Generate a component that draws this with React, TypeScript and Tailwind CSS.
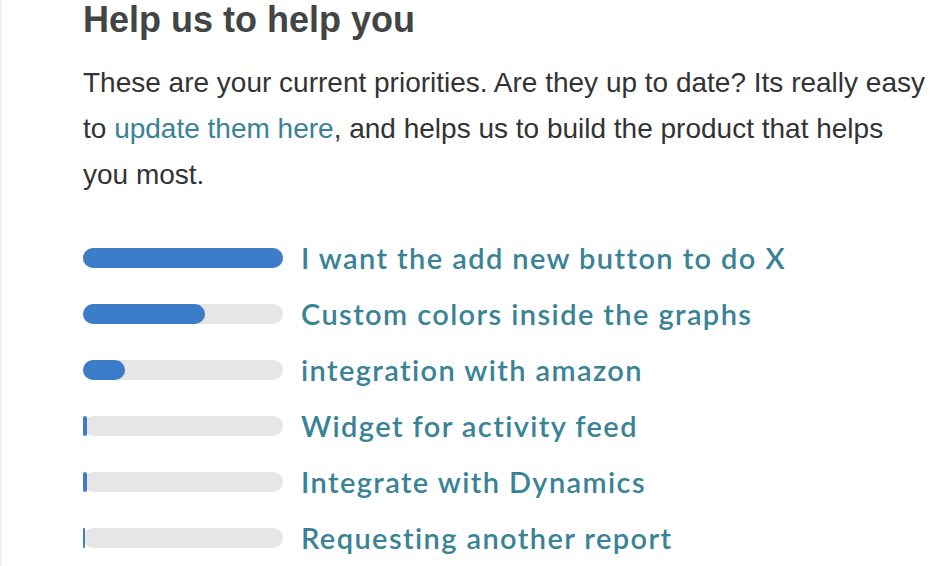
import React from "react";

const items = [
  { label: "I want the add new button to do X", fill: 200 },
  { label: "Custom colors inside the graphs", fill: 122 },
  { label: "integration with amazon", fill: 42 },
  { label: "Widget for activity feed", fill: 4 },
  { label: "Integrate with Dynamics", fill: 4 },
  { label: "Requesting another report", fill: 2 },
];

export default function App() {
  return (
    <div className="flex w-[950px] h-[566px] overflow-hidden bg-white">
      <div className="w-[2px] shrink-0 bg-[#f2f2f2]" />
      <div className="pl-[81px] pr-2 w-[940px] font-['Liberation_Sans',Arial,sans-serif]">
        <h1 className="text-[36px] leading-[40px] font-bold text-[#444444]">Help us to help you</h1>
        <p className="mt-[20px] text-[28px] leading-[46px] text-[#333333] w-[850px]">
          These are your current priorities. Are they up to date? Its really easy to{" "}
          <a className="text-[#3a8296]">update them here</a>, and helps us to build the product that helps
          you most.
        </p>
        <div className="mt-[32px] flex flex-col">
          {items.map((it) => (
            <div key={it.label} className="flex items-center h-[56px] gap-[18px]">
              <div className="w-[200px] h-[20px] rounded-full bg-[#e6e6e6] shrink-0">
                <div className="h-full rounded-full bg-[#3b7dc8]" style={{ width: it.fill }} />
              </div>
              <span className="font-['Lato',sans-serif] font-semibold text-[29px] leading-[40px] tracking-[1.4px] text-[#3a8296] whitespace-nowrap">
                {it.label}
              </span>
            </div>
          ))}
        </div>
      </div>
    </div>
  );
}
